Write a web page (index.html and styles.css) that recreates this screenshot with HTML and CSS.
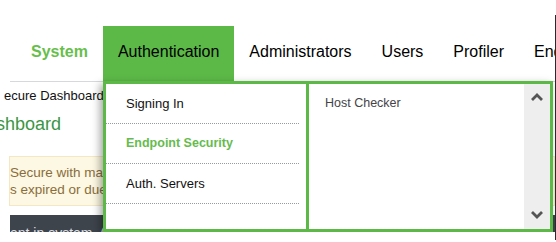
FILE: index.html
```html
<!DOCTYPE html>
<html lang="en">

<head>
    <meta charset="UTF-8">
    <meta name="viewport" content="width=device-width, initial-scale=1.0">
    <title>Authentication</title>
    <link rel="stylesheet" href="styles.css">
</head>

<body>
    <div class="frame">
        <div class="page">
            <nav class="topnav">
                <a class="nav-item current">System</a>
                <a class="nav-item open">Authentication</a>
                <a class="nav-item">Administrators</a>
                <a class="nav-item">Users</a>
                <a class="nav-item">Profiler</a>
                <a class="nav-item">Endpoint Policy</a>
            </nav>
            <div class="rule"></div>
            <div class="crumb">ecure Dashboard</div>
            <h2 class="title">Dashboard</h2>
            <div class="alert">
                <div>Secure with maximum licenses</div>
                <div>s expired or due to expire</div>
            </div>
            <div class="darkbar">ent in system. (0)</div>

            <!-- dropdown of the open tab -->
            <div class="dropdown">
                <ul class="menu">
                    <li>Signing In</li>
                    <li class="active">Endpoint Security</li>
                    <li>Auth. Servers</li>
                </ul>
                <div class="submenu">
                    <div class="subitems">
                        <div class="subitem">Host Checker</div>
                    </div>
                    <div class="scrollbar">
                        <svg width="12" height="8" viewBox="0 0 12 8"><path d="M1 7 L6 2 L11 7" fill="none" stroke="#555" stroke-width="2.8"/></svg>
                        <svg width="12" height="8" viewBox="0 0 12 8"><path d="M1 1 L6 6 L11 1" fill="none" stroke="#555" stroke-width="2.8"/></svg>
                    </div>
                </div>
            </div>
        </div>
        <div class="edge"></div>
    </div>
</body>

</html>
```

FILE: styles.css
```css
body {
    background-color: rgb(255, 255, 255);
    color: rgb(17, 17, 17);
    font-family: "Liberation Sans", Arial, sans-serif;
    margin: 0;
    padding: 0;
    height: 242px;
    overflow: hidden;
}

.frame {
    display: flex;
}

.page {
    height: 232px;
    overflow: hidden;
    position: relative;
    width: 555px;
}

.edge {
    background-color: rgb(40, 42, 48);
    height: 225px;
    margin-top: 15px;
    width: 1px;
}

.topnav {
    display: flex;
    flex-wrap: nowrap;
    padding-left: 16px;
    padding-top: 26px;
}

.nav-item {
    color: rgb(0, 0, 0);
    font-size: 16px;
    line-height: 51px;
    padding: 0 15px 4px 15px;
    white-space: nowrap;
}

.nav-item.current {
    color: rgb(104, 190, 76);
    font-weight: bold;
}

.nav-item.open {
    background-color: rgb(92, 185, 72);
}

.rule {
    background-color: rgb(214, 216, 220);
    height: 1px;
    margin-left: 10px;
}

.crumb {
    font-size: 13px;
    line-height: 15px;
    margin-top: 6px;
    padding-left: 4px;
    white-space: nowrap;
}

.title {
    color: rgb(58, 150, 70);
    font-size: 18px;
    font-weight: normal;
    line-height: 21px;
    margin: 11px 0 0 -27px;
    white-space: nowrap;
}

.alert {
    background-color: rgb(252, 248, 227);
    border: 1px solid rgb(245, 231, 196);
    color: rgb(138, 109, 59);
    font-size: 13.5px;
    line-height: 17px;
    margin: 21px 0 0 9px;
    padding: 7px 0;
    white-space: nowrap;
}

.darkbar {
    background-color: rgb(62, 68, 76);
    color: rgb(220, 222, 226);
    font-size: 14px;
    height: 18px;
    margin: 9px 0 0 10px;
    overflow: hidden;
    padding-top: 10px;
    box-sizing: border-box;
    white-space: nowrap;
}

.dropdown {
    background-color: rgb(255, 255, 255);
    border: 3px solid rgb(92, 185, 72);
    box-shadow: -3px 3px 8px rgba(0, 0, 0, 0.35);
    display: flex;
    height: 145px;
    left: 103px;
    position: absolute;
    top: 81px;
    width: 444px;
}

.menu {
    border-right: 3px solid rgb(92, 185, 72);
    list-style: none;
    margin: 0;
    padding: 0 7px 0 0;
    width: 193px;
}

.menu li {
    border-bottom: 1px dotted rgb(150, 155, 160);
    color: rgb(17, 17, 17);
    font-size: 13px;
    line-height: 39px;
    padding-left: 20px;
}

.menu li.active {
    color: rgb(102, 187, 79);
    font-size: 12.5px;
    font-weight: bold;
}

.submenu {
    display: flex;
    flex: 1;
}

.subitems {
    flex: 1;
    padding-left: 16px;
}

.subitem {
    color: rgb(68, 68, 72);
    font-size: 12.5px;
    line-height: 39px;
}

.scrollbar {
    align-items: center;
    background-color: rgb(238, 238, 238);
    display: flex;
    flex-direction: column;
    justify-content: space-between;
    padding: 9px 0 10px 0;
    width: 26px;
}
```
